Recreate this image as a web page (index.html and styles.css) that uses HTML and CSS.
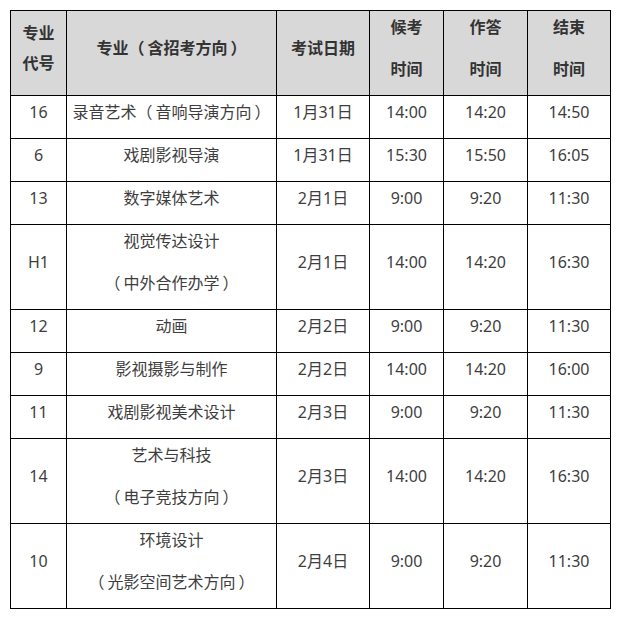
FILE: index.html
```html
<!DOCTYPE html>
<html lang="zh-CN">
<head>
<meta charset="utf-8">
<title>考试时间安排</title>
<link rel="stylesheet" href="styles.css">
</head>
<body>
<table class="schedule">
  <colgroup>
    <col class="c-code">
    <col class="c-major">
    <col class="c-date">
    <col class="c-wait">
    <col class="c-answer">
    <col class="c-end">
  </colgroup>
  <thead>
    <tr>
      <th><div class="tight">专业<br>代号</div></th>
      <th><div class="line">专业<span class="po">（</span>含招考方向<span class="pc">）</span></div></th>
      <th><div class="line">考试日期</div></th>
      <th><div class="line">候考</div><div class="line second">时间</div></th>
      <th><div class="line">作答</div><div class="line second">时间</div></th>
      <th><div class="line">结束</div><div class="line second">时间</div></th>
    </tr>
  </thead>
  <tbody>
    <tr><td><div class="line">16</div></td><td><div class="line">录音艺术<span class="po">（</span>音响导演方向<span class="pc">）</span></div></td><td><div class="line">1月31日</div></td><td><div class="line">14:00</div></td><td><div class="line">14:20</div></td><td><div class="line">14:50</div></td></tr>
    <tr><td><div class="line">6</div></td><td><div class="line">戏剧影视导演</div></td><td><div class="line">1月31日</div></td><td><div class="line">15:30</div></td><td><div class="line">15:50</div></td><td><div class="line">16:05</div></td></tr>
    <tr><td><div class="line">13</div></td><td><div class="line">数字媒体艺术</div></td><td><div class="line">2月1日</div></td><td><div class="line">9:00</div></td><td><div class="line">9:20</div></td><td><div class="line">11:30</div></td></tr>
    <tr><td><div class="line">H1</div></td><td><div class="line">视觉传达设计</div><div class="line second"><span class="po">（</span>中外合作办学<span class="pc">）</span></div></td><td><div class="line">2月1日</div></td><td><div class="line">14:00</div></td><td><div class="line">14:20</div></td><td><div class="line">16:30</div></td></tr>
    <tr><td><div class="line">12</div></td><td><div class="line">动画</div></td><td><div class="line">2月2日</div></td><td><div class="line">9:00</div></td><td><div class="line">9:20</div></td><td><div class="line">11:30</div></td></tr>
    <tr><td><div class="line">9</div></td><td><div class="line">影视摄影与制作</div></td><td><div class="line">2月2日</div></td><td><div class="line">14:00</div></td><td><div class="line">14:20</div></td><td><div class="line">16:00</div></td></tr>
    <tr><td><div class="line">11</div></td><td><div class="line">戏剧影视美术设计</div></td><td><div class="line">2月3日</div></td><td><div class="line">9:00</div></td><td><div class="line">9:20</div></td><td><div class="line">11:30</div></td></tr>
    <tr><td><div class="line">14</div></td><td><div class="line">艺术与科技</div><div class="line second"><span class="po">（</span>电子竞技方向<span class="pc">）</span></div></td><td><div class="line">2月3日</div></td><td><div class="line">14:00</div></td><td><div class="line">14:20</div></td><td><div class="line">16:30</div></td></tr>
    <tr><td><div class="line">10</div></td><td><div class="line">环境设计</div><div class="line second"><span class="po">（</span>光影空间艺术方向<span class="pc">）</span></div></td><td><div class="line">2月4日</div></td><td><div class="line">9:00</div></td><td><div class="line">9:20</div></td><td><div class="line">11:30</div></td></tr>
  </tbody>
</table>
</body>
</html>
```
FILE: styles.css
```css
html, body {
  margin: 0;
  padding: 0;
  background: #ffffff;
}

body {
  padding: 10px 0 0 10px;
  font-family: "Noto Sans", "Noto Sans CJK SC", sans-serif;
  font-size: 16px;
  color: #3e3e3e;
}

.schedule {
  border-collapse: collapse;
  table-layout: fixed;
  width: 600px;
}

.c-code { width: 56px; }
.c-major { width: 210px; }
.c-date { width: 93px; }
.c-wait { width: 74px; }
.c-answer { width: 84px; }
.c-end { width: 83px; }

.schedule th,
.schedule td {
  border: 1px solid #000000;
  padding: 4px 4px 14px;
  text-align: center;
  vertical-align: middle;
  font-weight: normal;
}

.schedule th {
  background: #d8d8d8;
  color: #333333;
  font-weight: bold;
}

.line {
  line-height: 24px;
  white-space: nowrap;
}

.line.second {
  margin-top: 18px;
}

.tight {
  line-height: 30px;
}

.po {
  padding-right: 3px;
}

.pc {
  padding-left: 3px;
}
```
